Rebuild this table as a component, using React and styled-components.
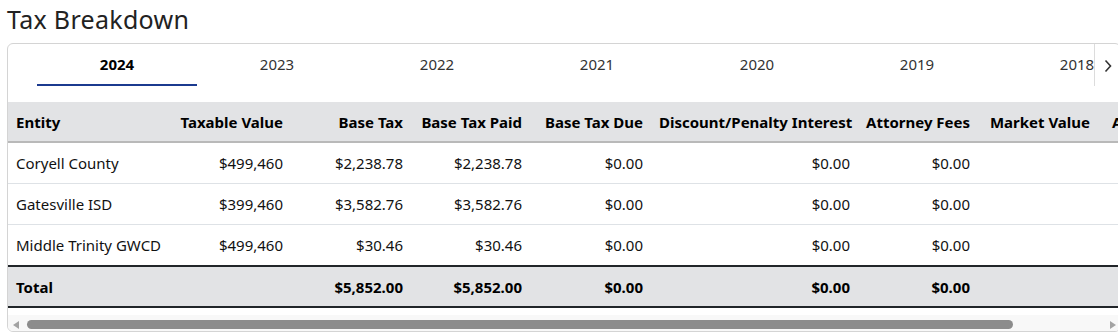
import React from "react";
import styled, { createGlobalStyle } from "styled-components";

const GlobalStyle = createGlobalStyle`
  body {
    margin: 0;
    background: #fff;
    overflow: hidden;
    font-family: "Noto Sans", "Segoe UI", sans-serif;
    color: #212529;
  }
`;

const Page = styled.div`
  padding: 0 7px;
`;

const Title = styled.h2`
  margin: 0 0 7px;
  padding-top: 2px;
  font-size: 25px;
  line-height: 34px;
  font-weight: 400;
  color: #222;
  letter-spacing: 0.3px;
`;

const Card = styled.div`
  width: 1112px;
  border: 1px solid #d4d4d4;
  border-radius: 6px;
  background: #fff;
  overflow: hidden;
`;

const TabBar = styled.div`
  display: flex;
  height: 42px;
  margin-bottom: 16px;
`;

const TabSpacer = styled.div`
  width: 29px;
  flex: none;
`;

const TabList = styled.div`
  display: flex;
  flex: 1;
  overflow: hidden;
`;

const Tab = styled.div`
  flex: none;
  width: 160px;
  display: flex;
  align-items: center;
  justify-content: center;
  font-size: 15px;
  padding-bottom: 1px;
  font-weight: ${(p) => (p.$active ? 700 : 400)};
  color: ${(p) => (p.$active ? "#000" : "#333")};
  border-bottom: 2px solid ${(p) => (p.$active ? "#1b3a8f" : "transparent")};
  box-sizing: border-box;
`;

const ScrollButton = styled.div`
  flex: none;
  width: 26px;
  border-left: 1px solid #dcdcdc;
  display: flex;
  align-items: center;
  justify-content: center;
  padding-top: 1px;
  box-sizing: border-box;
`;

const TableScroll = styled.div`
  overflow: hidden;
`;

const Table = styled.table`
  table-layout: fixed;
  width: 1206px;
  border-collapse: collapse;
  margin-bottom: 7px;
  font-size: 15px;
  color: #111;
`;

const Th = styled.th`
  background: #e2e3e5;
  padding: 9px 8px 7px;
  line-height: 23px;
  font-weight: 700;
  white-space: nowrap;
  text-align: ${(p) => (p.$left ? "left" : "right")};
  border-bottom: 2px solid #b9b9b9;
  color: #000;
`;

const Td = styled.td`
  padding: 9px 8px;
  line-height: 22px;
  white-space: nowrap;
  text-align: ${(p) => (p.$left ? "left" : "right")};
  border-bottom: 1px solid #dee2e6;
`;

const BodyRow = styled.tr`
  &:last-child td {
    border-bottom: none;
  }
`;

const TotalCell = styled.td`
  background: #e2e3e5;
  padding: 9px 8px 7px;
  line-height: 23px;
  font-weight: 700;
  white-space: nowrap;
  color: #000;
  text-align: ${(p) => (p.$left ? "left" : "right")};
  border-top: 2px solid #212529;
  border-bottom: 2px solid #212529;
`;

const ScrollBar = styled.div`
  display: flex;
  align-items: center;
  height: 16px;
  padding-top: 3px;
  box-sizing: border-box;
  background: #f8f8f8;
`;

const ScrollArrow = styled.div`
  flex: none;
  width: 15px;
  display: flex;
  justify-content: center;
  margin-left: ${(p) => (p.$right ? "auto" : "0")};

  &::before {
    content: "";
    width: 0;
    height: 0;
    border-top: 4px solid transparent;
    border-bottom: 4px solid transparent;
    ${(p) =>
      p.$right
        ? "border-left: 6px solid #a3a3a3;"
        : "border-right: 6px solid #a3a3a3;"}
  }
`;

const ScrollThumb = styled.div`
  flex: none;
  margin-left: 4px;
  width: ${(p) => p.$width}px;
  height: 9px;
  border-radius: 5px;
  background: #8c8c8c;
`;

const years = ["2024", "2023", "2022", "2021", "2020", "2019", "2018", "2017"];
const widths = [163, 120, 120, 119, 121, 207, 120, 120, 116];
const headers = [
  "Entity",
  "Taxable Value",
  "Base Tax",
  "Base Tax Paid",
  "Base Tax Due",
  "Discount/Penalty Interest",
  "Attorney Fees",
  "Market Value",
  "Amount Due",
];

const rows = [
  ["Coryell County", "$499,460", "$2,238.78", "$2,238.78", "$0.00", "$0.00", "$0.00", "", ""],
  ["Gatesville ISD", "$399,460", "$3,582.76", "$3,582.76", "$0.00", "$0.00", "$0.00", "", ""],
  ["Middle Trinity GWCD", "$499,460", "$30.46", "$30.46", "$0.00", "$0.00", "$0.00", "", ""],
];

const total = ["Total", "", "$5,852.00", "$5,852.00", "$0.00", "$0.00", "$0.00", "", ""];

const Chevron = () => (
  <svg width="8" height="14" viewBox="0 0 8 14">
    <polyline points="1.5,1.5 6.5,7 1.5,12.5" fill="none" stroke="#333" strokeWidth="1.6" />
  </svg>
);

export default function App() {
  return (
    <Page>
      <GlobalStyle />
      <Title>Tax Breakdown</Title>
      <Card>
        <TabBar>
          <TabSpacer />
          <TabList>
            {years.map((y, i) => (
              <Tab key={y} $active={i === 0}>
                {y}
              </Tab>
            ))}
          </TabList>
          <ScrollButton>
            <Chevron />
          </ScrollButton>
        </TabBar>
        <TableScroll>
          <Table>
            <colgroup>
              {widths.map((w, i) => (
                <col key={i} style={{ width: w }} />
              ))}
            </colgroup>
            <thead>
              <tr>
                {headers.map((h, i) => (
                  <Th key={h} $left={i === 0}>
                    {h}
                  </Th>
                ))}
              </tr>
            </thead>
            <tbody>
              {rows.map((r) => (
                <BodyRow key={r[0]}>
                  {r.map((c, i) => (
                    <Td key={i} $left={i === 0}>
                      {c}
                    </Td>
                  ))}
                </BodyRow>
              ))}
            </tbody>
            <tfoot>
              <tr>
                {total.map((c, i) => (
                  <TotalCell key={i} $left={i === 0}>
                    {c}
                  </TotalCell>
                ))}
              </tr>
            </tfoot>
          </Table>
        </TableScroll>
        <ScrollBar>
          <ScrollArrow />
          <ScrollThumb $width={986} />
          <ScrollArrow $right />
        </ScrollBar>
      </Card>
    </Page>
  );
}
